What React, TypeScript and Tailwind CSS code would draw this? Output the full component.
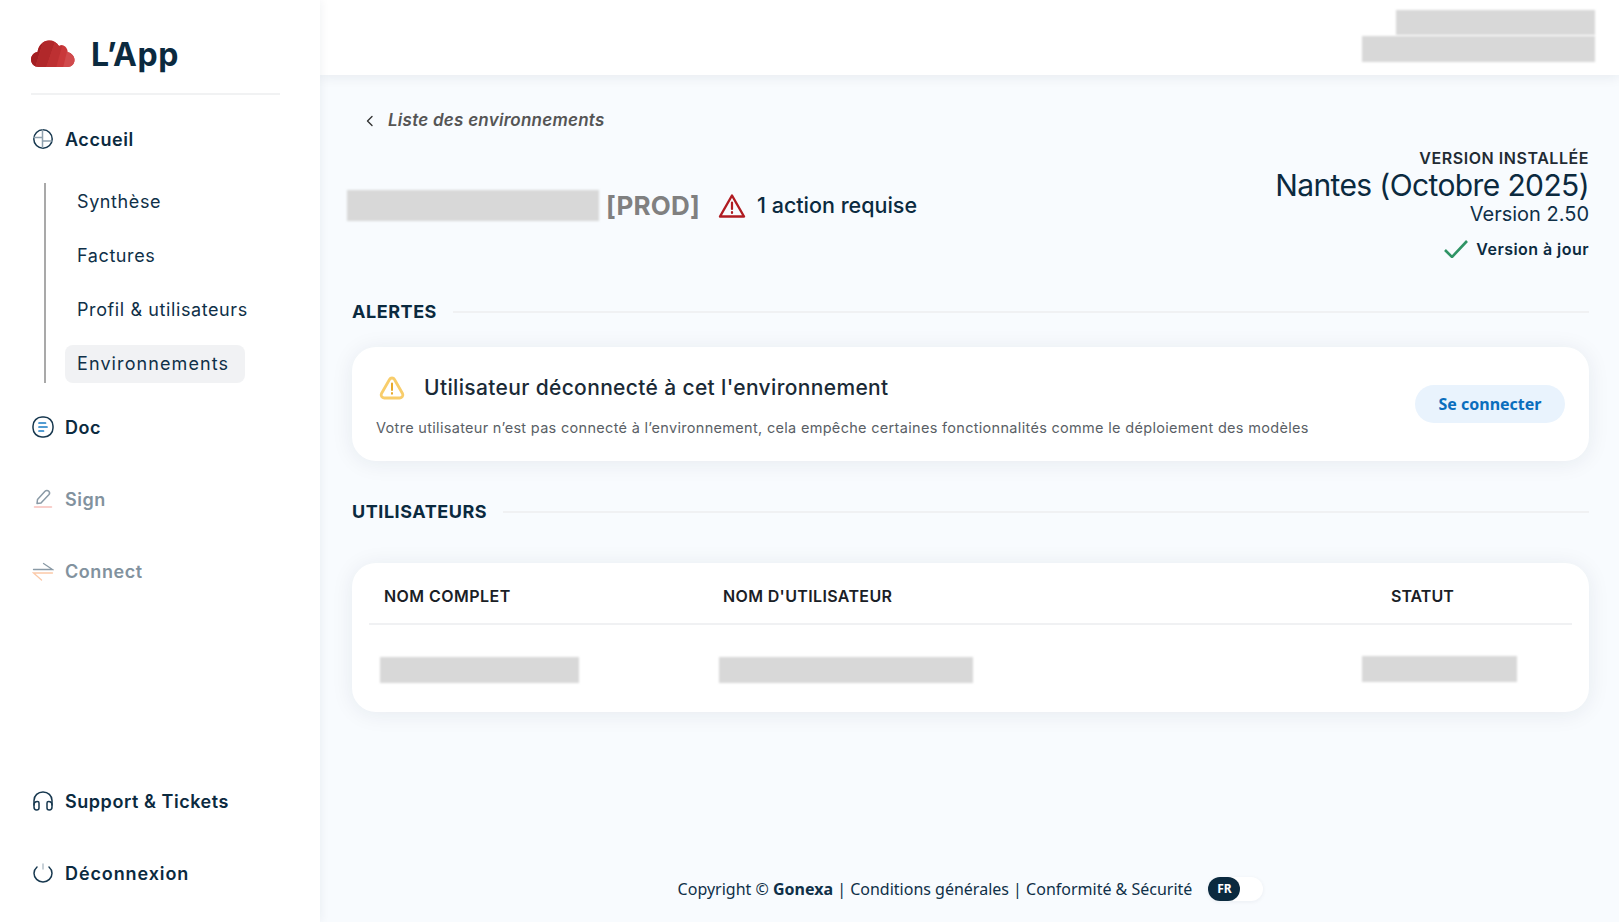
import { ReactNode } from "react";

function Masked({ className }: { className: string }) {
  return <div className={"bg-[#d8d8d8] blur-[1px] " + className} />;
}

function Logo() {
  return (
    <svg width="44" height="29" viewBox="0 0 44 29">
      <defs>
        <clipPath id="cloud">
          <path d="M8 28C3 28 0 24.5 0 20.5C0 16.5 3 13.5 6.5 13C7.5 6 12.5 1.5 18 1.5C22.5 1.5 26 3.5 28 7C29.5 6.2 31 6 32.5 6.5C35 7.5 36.5 10 36.5 13C40.5 14 43.5 17 43.5 21C43.5 25 40.5 28 36.5 28Z" />
        </clipPath>
      </defs>
      <g clipPath="url(#cloud)">
        <rect width="44" height="29" fill="#c9383a" />
        <path d="M0 0H13L4 29H0Z" fill="#a31f22" />
        <path d="M13 0H25L15 29H4Z" fill="#b1282a" />
        <path d="M25 0H33L25 29H15Z" fill="#bd3032" />
        <path d="M39 0H44V29H32Z" fill="#d04a4c" />
      </g>
    </svg>
  );
}

function NavIcon({ name, muted }: { name: string; muted?: boolean }) {
  const dark = muted ? "#8a9aa6" : "#17384f";
  return (
    <svg width="22" height="22" viewBox="0 0 22 22" fill="none" strokeWidth="1.5" strokeLinecap="round" className="shrink-0">
      {name === "home" && (
        <>
          <circle cx="11" cy="11" r="9.2" stroke={dark} />
          <path d="M10.5 2V19.5M2 9.5H10.5M10.5 13H19.5" stroke="#8fa1ae" />
        </>
      )}
      {name === "doc" && (
        <>
          <rect x="1" y="1" width="20" height="20" rx="9" stroke={dark} />
          <path d="M7 7H13.5M7 11H15M7 15H11.5" stroke="#1a7cc4" strokeWidth="1.7" />
        </>
      )}
      {name === "sign" && (
        <>
          <path d="M5 15.5L5.5 11.5L13 3.2C14 2.2 15.8 2.2 16.8 3.2C17.8 4.3 17.7 5.8 16.8 6.8L9 15Z" stroke={dark} strokeWidth="1.5" strokeLinejoin="round" />
          <path d="M2.5 19H19.5" stroke="#f7c0bb" />
        </>
      )}
      {name === "connect" && (
        <>
          <path d="M1.5 9.5H20.5L11.5 3.5" stroke={dark} strokeWidth="1.3" />
          <path d="M20.5 13H1.5L9.5 20" stroke="#fbc9a8" strokeWidth="1.3" />
        </>
      )}
      {name === "support" && (
        <>
          <path d="M2 15V10.5C2 5.5 6 2 11 2C16 2 20 5.5 20 10.5V15" stroke={dark} />
          <path d="M2 15C2 12.8 3.5 11.5 5.5 11.5C6.5 11.5 7 12 7 13V18C7 19.3 6 20 4.7 20C3 20 2 18.5 2 17ZM20 15C20 12.8 18.5 11.5 16.5 11.5C15.5 11.5 15 12 15 13V18C15 19.3 16 20 17.3 20C19 20 20 18.5 20 17Z" stroke={dark} />
        </>
      )}
      {name === "power" && (
        <>
          <path d="M5 5C3.2 6.6 2 8.7 2 11.2C2 16 6 20 11 20C16 20 20 16 20 11.2C20 8.7 18.8 6.6 17 5" stroke={dark} />
          <path d="M11 2V7" stroke="#b6c2cb" />
        </>
      )}
    </svg>
  );
}

function NavItem({ icon, label, muted, className, spacing }: { icon: string; label: string; muted?: boolean; className?: string; spacing?: string }) {
  return (
    <div className={"flex items-center gap-[11px] pl-[32px] h-[24px] " + (className ?? "")}>
      <NavIcon name={icon} muted={muted} />
      <span className={"text-[18px] font-semibold " + (spacing ?? "tracking-[0.55px]") + " " + (muted ? "text-[#82929e]" : "text-[#0b2a3f]")}>{label}</span>
    </div>
  );
}

function SubItem({ children, active }: { children: ReactNode; active?: boolean }) {
  return (
    <div className={"flex items-center h-[38px] rounded-lg pl-[12px] pb-px text-[18px] font-normal text-[#0f3048] " + (active ? "w-[180px] bg-[#f1f2f4] tracking-[1.1px]" : "w-fit pr-[16px] tracking-[0.6px]")}>
      {children}
    </div>
  );
}

function SectionTitle({ children }: { children: ReactNode }) {
  return (
    <div className="flex items-center gap-[16px]">
      <span className="text-[18px] font-bold text-[#0b2a3f] leading-[22px] tracking-[0.55px]">{children}</span>
      <div className="grow h-[2px] bg-[#f0f1f3]" />
    </div>
  );
}

export default function App() {
  return (
    <div className="flex w-[1619px] h-[922px] overflow-hidden bg-[#f8fbfe] font-['Inter',sans-serif] text-[#0b2a3f]">
      <aside className="w-[320px] shrink-0 bg-white shadow-[0_0_10px_rgba(20,40,70,0.07)] z-20 flex flex-col">
        <div className="ml-[31px] mr-[40px] h-[95px] border-b-2 border-[#f1f2f3] flex items-center gap-[16px] pt-[13px]">
          <Logo />
          <span className="text-[32px] font-bold text-[#0b2a3f] tracking-[0.6px] pt-[3px]">L’App</span>
        </div>
        <NavItem icon="home" label="Accueil" className="mt-[32px]" />
        <div className="ml-[44px] mt-[32px] border-l-2 border-[#a9a9a9] h-[200px] pl-[19px] flex flex-col gap-[16px]">
          <SubItem>Synthèse</SubItem>
          <SubItem>Factures</SubItem>
          <SubItem>Profil &amp; utilisateurs</SubItem>
          <SubItem active>Environnements</SubItem>
        </div>
        <NavItem icon="doc" label="Doc" className="mt-[32px]" />
        <NavItem icon="sign" label="Sign" muted className="mt-[48px]" />
        <NavItem icon="connect" label="Connect" muted className="mt-[48px]" />
        <NavItem icon="support" label="Support & Tickets" className="mt-auto" />
        <NavItem icon="power" label="Déconnexion" spacing="tracking-[0.9px]" className="mt-[48px] mb-[37px]" />
      </aside>

      <div className="grow min-w-0 flex flex-col">
        <header className="h-[75px] shrink-0 bg-white shadow-[0_2px_12px_rgba(20,40,70,0.08)] z-10 flex flex-col items-end pt-[10px] pr-[24px] gap-[1px]">
          <Masked className="w-[199px] h-[25px]" />
          <Masked className="w-[233px] h-[26px]" />
        </header>

        <main className="grow flex flex-col pl-[32px] pr-[30px]">
          <div className="flex justify-between items-start">
            <div className="pt-[33px]">
              <div className="flex items-center gap-[10px] pl-[10px] h-[26px]">
                <svg width="16" height="16" viewBox="0 0 16 16" fill="none" stroke="#333" strokeWidth="1.4" strokeLinecap="round" strokeLinejoin="round">
                  <path d="M10 3.5L5.5 8L10 12.5" />
                </svg>
                <span className="text-[17px] italic font-semibold text-[#555555] tracking-[0.25px]">Liste des environnements</span>
              </div>
              <div className="flex items-center mt-[52px] -ml-[5px]">
                <Masked className="w-[252px] h-[31px]" />
                <span className="ml-[7px] text-[26px] font-bold text-[#808080] tracking-[0.2px]">[PROD]</span>
                <svg width="28" height="26" viewBox="0 0 28 26" fill="none" className="ml-[18px]">
                  <path d="M14 2.5L26 23.5H2Z" stroke="#b01c22" strokeWidth="2.4" strokeLinejoin="round" />
                  <path d="M14 9.5V16M14 19V20" stroke="#b01c22" strokeWidth="2.2" strokeLinecap="round" />
                </svg>
                <span className="ml-[11px] text-[21.5px] font-medium text-[#0b2a3f]">1 action requise</span>
              </div>
            </div>
            <div className="pt-[73px] flex flex-col items-end">
              <span className="text-[16px] font-semibold leading-[20px] text-[#222b33] tracking-[0.55px]">VERSION INSTALLÉE</span>
              <span className="text-[30px] font-normal leading-[35px] text-[#0b2a3f] tracking-[-0.62px]">Nantes (Octobre 2025)</span>
              <span className="text-[20px] font-normal leading-[22px] text-[#0f3048]">Version 2.50</span>
              <div className="flex items-center gap-[8px] mt-[12px] h-[24px]">
                <svg width="24" height="18" viewBox="0 0 24 18" fill="none" stroke="#2f9465" strokeWidth="2.6">
                  <path d="M1 10L8 17L23 1" />
                </svg>
                <span className="text-[16px] font-semibold text-[#0b2a3f] tracking-[0.45px]">Version à jour</span>
              </div>
            </div>
          </div>

          <div className="mt-[40px]">
            <SectionTitle>ALERTES</SectionTitle>
          </div>

          <section className="mt-[24px] h-[114px] rounded-[24px] bg-white shadow-[0_2px_22px_rgba(20,40,70,0.08)] flex items-center pl-[24px] pr-[24px]">
            <div className="grow pt-[4px]">
              <div className="flex items-center gap-[19px] pl-[3px]">
                <svg width="26" height="24" viewBox="0 0 26 24" fill="none">
                  <path d="M10.5 3.5C11.6 1.5 14.4 1.5 15.5 3.5L23.5 17.5C24.6 19.7 23 22 20.8 22H5.2C3 22 1.4 19.7 2.5 17.5Z" stroke="#f8cd6b" strokeWidth="2.8" strokeLinejoin="round" />
                  <path d="M13 7.5V14M13 17V17.8" stroke="#e8a92a" strokeWidth="2" strokeLinecap="round" />
                </svg>
                <span className="text-[21px] font-medium text-[#1a2a36] leading-[26px] tracking-[0.35px]">Utilisateur déconnecté à cet l'environnement</span>
              </div>
              <p className="mt-[18px] text-[14.5px] text-[#5a5f66] leading-[18px] tracking-[0.31px]">
                Votre utilisateur n’est pas connecté à l’environnement, cela empêche certaines fonctionnalités comme le déploiement des modèles
              </p>
            </div>
            <button className="shrink-0 w-[150px] h-[38px] rounded-full bg-[#e9f3fd] text-[#0a6ebd] text-[16px] font-bold font-['Noto_Sans',sans-serif]">
              Se connecter
            </button>
          </section>

          <div className="mt-[40px]">
            <SectionTitle>UTILISATEURS</SectionTitle>
          </div>

          <section className="mt-[40px] h-[149px] rounded-[24px] bg-white shadow-[0_2px_22px_rgba(20,40,70,0.08)] px-[17px]">
            <div className="h-[62px] border-b-2 border-[#f0f1f3] grid grid-cols-[339px_668px_1fr] items-center pt-[6px] pl-[15px] text-[16px] font-semibold text-[#1a2026]">
              <span className="tracking-[0.45px]">NOM COMPLET</span>
              <span className="tracking-[0.36px]">NOM D'UTILISATEUR</span>
              <span>STATUT</span>
            </div>
            <div className="grid grid-cols-[339px_643px_1fr] pl-[11px] pt-[32px]">
              <Masked className="w-[199px] h-[26px]" />
              <Masked className="w-[254px] h-[26px]" />
              <Masked className="w-[155px] h-[26px] -mt-px" />
            </div>
          </section>

          <footer className="mt-auto mb-[21px] flex items-center justify-center gap-[16px] font-['Noto_Sans',sans-serif] text-[16px] text-[#0f3048]">
            <span>
              Copyright © <b className="font-bold">Gonexa</b> | Conditions générales | Conformité &amp; Sécurité
            </span>
            <div className="w-[55px] h-[24px] rounded-full bg-white shadow-[0_1px_4px_rgba(20,40,70,0.06)] flex">
              <div className="w-[32px] h-[24px] rounded-full bg-[#0b2a3f] text-white text-[12px] font-bold flex items-center justify-center">FR</div>
            </div>
          </footer>
        </main>
      </div>
    </div>
  );
}
